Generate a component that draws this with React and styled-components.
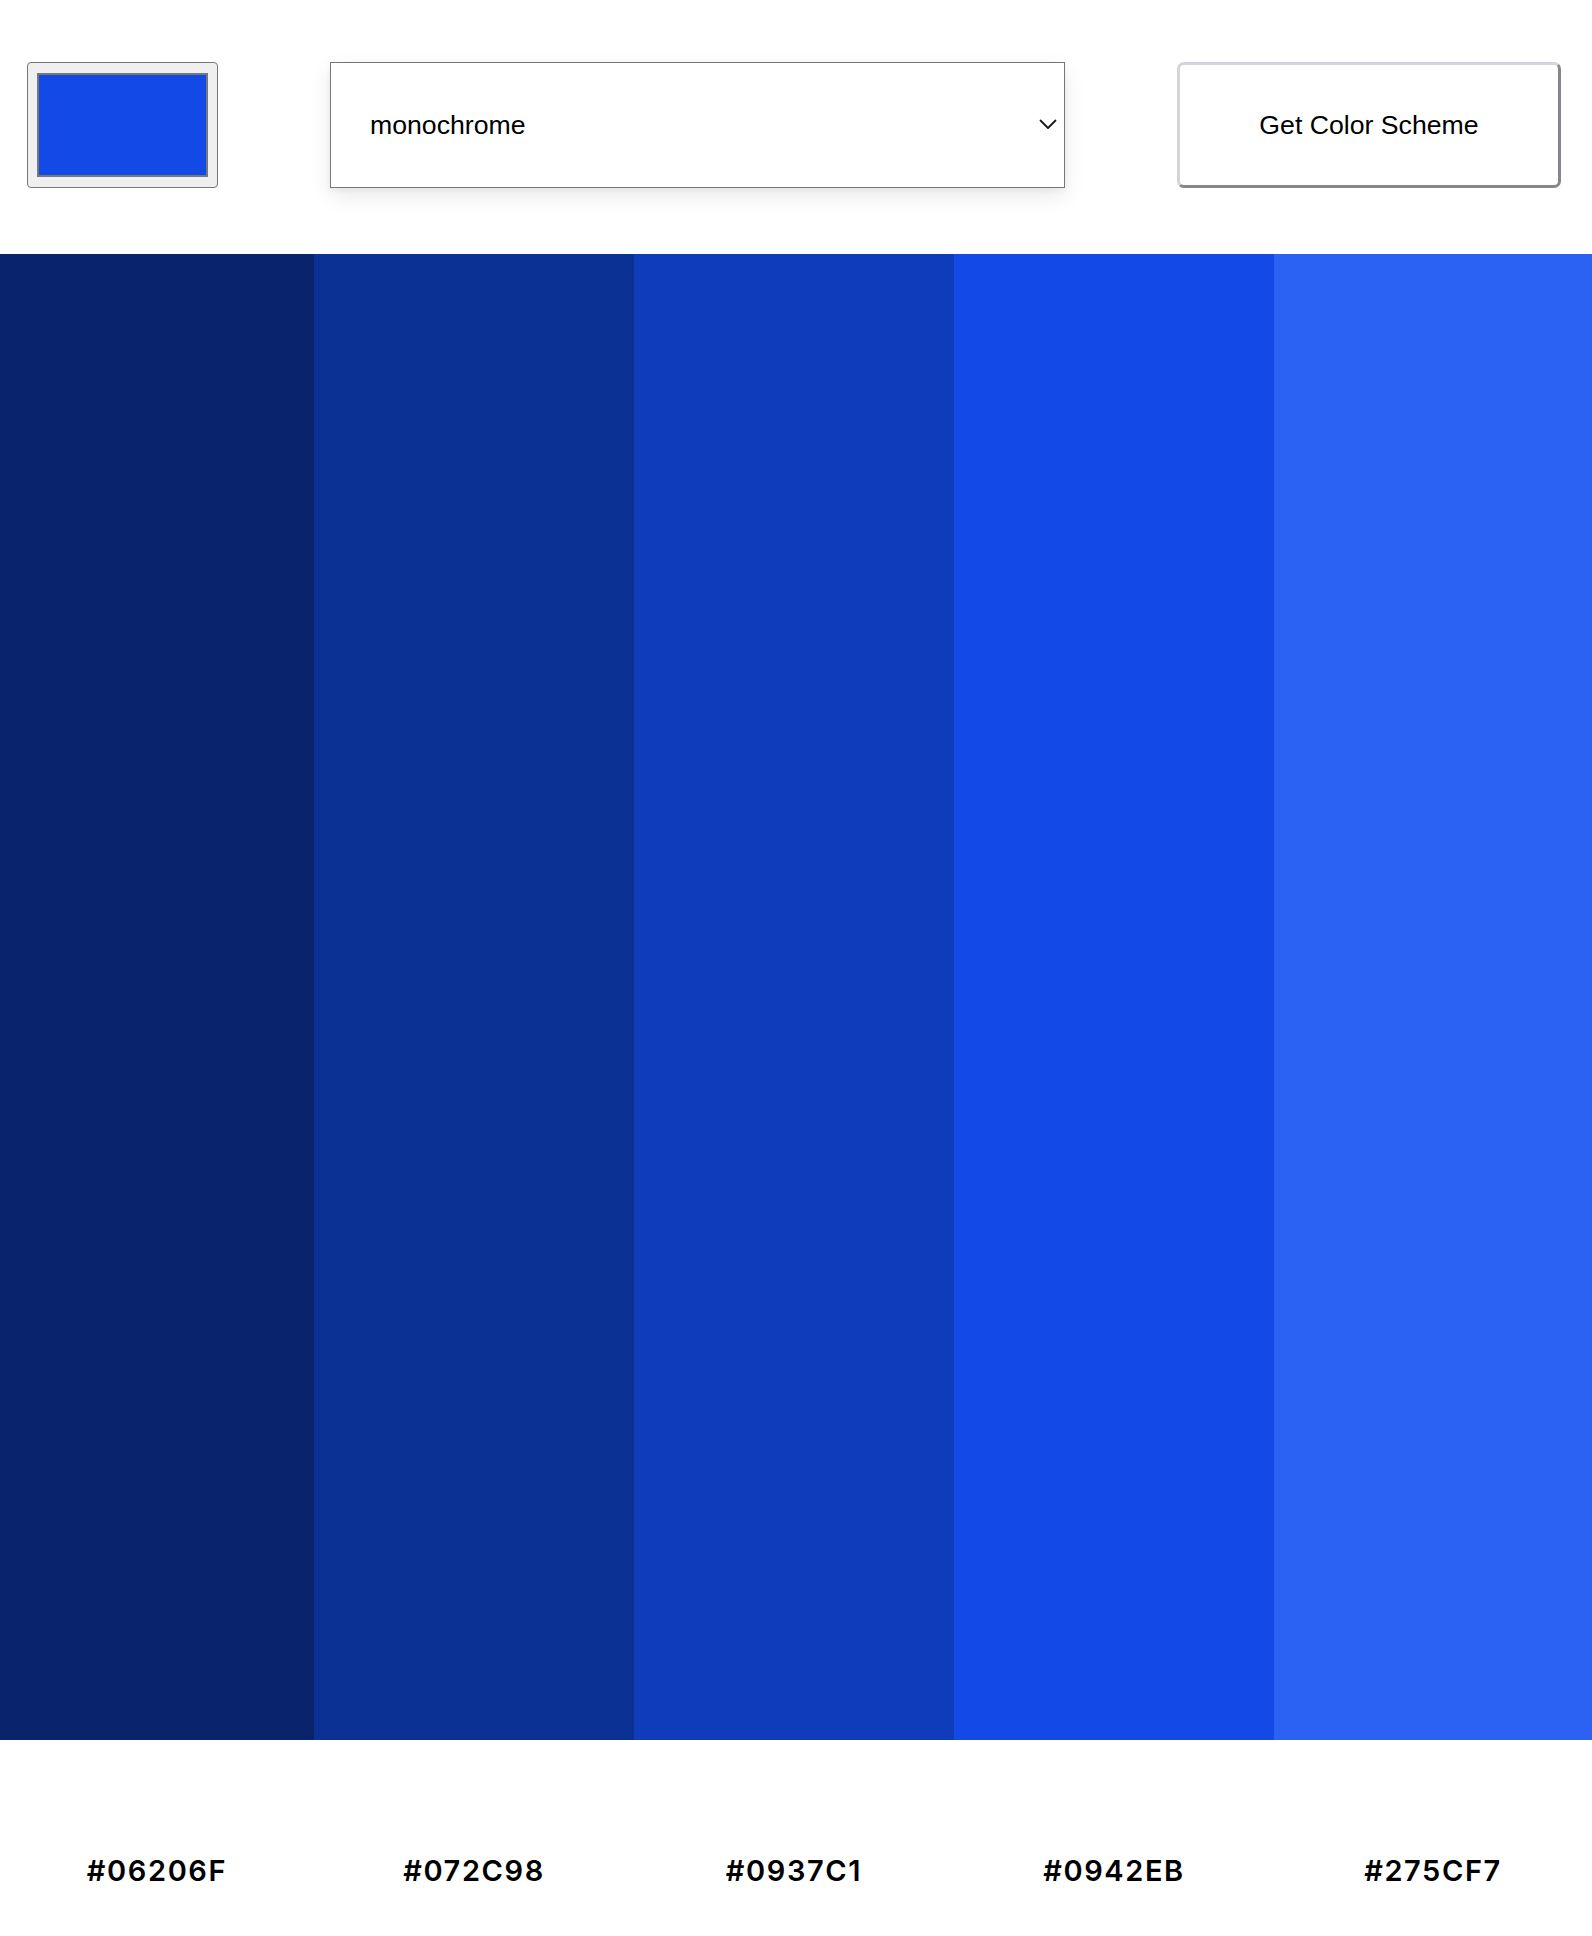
import React, { useState } from "react";
import styled, { createGlobalStyle } from "styled-components";

const GlobalStyle = createGlobalStyle`
  html, body {
    margin: 0;
    padding: 0;
    background: #ffffff;
  }
  body {
    font-family: "Liberation Sans", Arial, sans-serif;
    color: #000;
  }
  * { box-sizing: border-box; }
`;

const Page = styled.div`
  width: 100%;
  min-height: 1936px;
  background: #fff;
`;

const Toolbar = styled.header`
  display: flex;
  align-items: center;
  justify-content: space-between;
  padding: 62px 31px 66px 27px;
`;

const ColorPicker = styled.input`
  -webkit-appearance: none;
  appearance: none;
  width: 191px;
  height: 126px;
  margin: 0;
  padding: 10px 9px;
  background: #efefef;
  border: 1px solid #767676;
  border-radius: 4px;
  cursor: pointer;

  &::-webkit-color-swatch-wrapper {
    padding: 0;
  }
  &::-webkit-color-swatch {
    border: 2px solid #777777;
    border-radius: 0;
  }
`;

const SelectWrap = styled.div`
  position: relative;
  width: 735px;
  height: 126px;
  box-shadow: 0 8px 20px rgba(0, 0, 0, 0.09), 0 2px 6px rgba(0, 0, 0, 0.05);
`;

const ModeSelect = styled.select`
  -webkit-appearance: none;
  appearance: none;
  width: 100%;
  height: 100%;
  margin: 0;
  padding: 0 40px 0 39px;
  background: #fff;
  border: 1px solid #767676;
  border-radius: 0;
  font-family: "Liberation Sans", Arial, sans-serif;
  font-size: 26.67px;
  color: #000;
  outline: none;
`;

const Chevron = styled.svg`
  position: absolute;
  right: 8px;
  top: 50%;
  width: 18px;
  height: 11px;
  margin-top: -6px;
  pointer-events: none;
`;

const SchemeButton = styled.button`
  width: 384px;
  height: 126px;
  margin: 0;
  padding: 0;
  background: #fff;
  border-style: solid;
  border-width: 3px;
  border-color: #d2d5dc #86878c #86878c #d2d5dc;
  border-radius: 7px;
  font-family: "Liberation Sans", Arial, sans-serif;
  font-size: 26.67px;
  color: #000;
  cursor: pointer;
`;

const Palette = styled.section`
  display: grid;
  grid-template-columns: 314px 320px 320px 320px 1fr;
`;

const Column = styled.div`
  display: flex;
  flex-direction: column;
`;

const Swatch = styled.div`
  height: 1486px;
  background: ${(p) => p.$color};
`;

const HexLabel = styled.p`
  margin: 0;
  padding-top: 114px;
  text-align: center;
  font-family: Inter, "Liberation Sans", sans-serif;
  font-weight: 600;
  font-size: 29px;
  letter-spacing: 1.6px;
  line-height: 34px;
  color: #000;
`;

const scheme = [
  { hex: "#06206F", shown: "#0a246b" },
  { hex: "#072C98", shown: "#0a3193" },
  { hex: "#0937C1", shown: "#0f3cbb" },
  { hex: "#0942EB", shown: "#1349e6" },
  { hex: "#275CF7", shown: "#2c62f4" },
];

export default function App() {
  const [mode, setMode] = useState("monochrome");
  const [seed, setSeed] = useState("#1349e6");

  return (
    <Page>
      <GlobalStyle />
      <Toolbar>
        <ColorPicker
          type="color"
          value={seed}
          onChange={(e) => setSeed(e.target.value)}
        />
        <SelectWrap>
          <ModeSelect value={mode} onChange={(e) => setMode(e.target.value)}>
            <option value="monochrome">monochrome</option>
            <option value="monochrome-dark">monochrome-dark</option>
            <option value="monochrome-light">monochrome-light</option>
            <option value="analogic">analogic</option>
            <option value="complement">complement</option>
            <option value="analogic-complement">analogic-complement</option>
            <option value="triad">triad</option>
            <option value="quad">quad</option>
          </ModeSelect>
          <Chevron viewBox="0 0 18 11" fill="none">
            <path
              d="M1.5 1.5 L9 9 L16.5 1.5"
              stroke="#1a1a1a"
              strokeWidth="1.8"
              strokeLinecap="round"
              strokeLinejoin="round"
            />
          </Chevron>
        </SelectWrap>
        <SchemeButton type="button">Get Color Scheme</SchemeButton>
      </Toolbar>
      <Palette>
        {scheme.map((c) => (
          <Column key={c.hex}>
            <Swatch $color={c.shown} />
            <HexLabel>{c.hex}</HexLabel>
          </Column>
        ))}
      </Palette>
    </Page>
  );
}
